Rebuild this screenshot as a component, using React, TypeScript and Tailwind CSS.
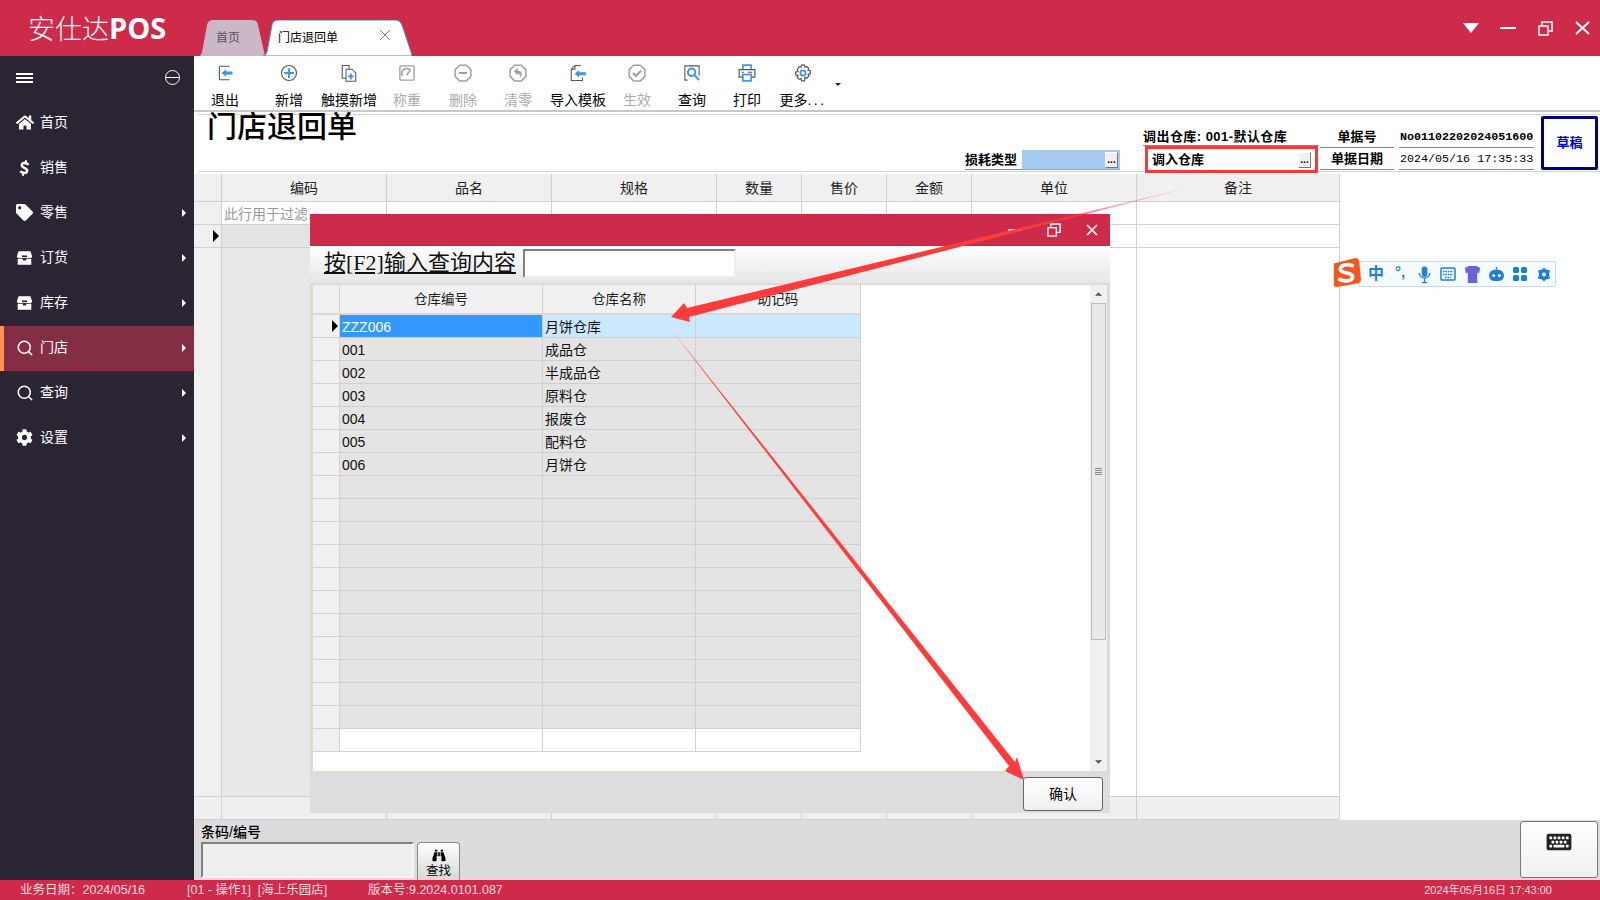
import React from "react";
import { FaHome, FaTag, FaCog, FaDollarSign, FaBinoculars, FaKeyboard } from "react-icons/fa";
import { Search } from "lucide-react";

const RED = "bg-[#cd2b49]";

const Box = ({ className = "" }: { className?: string }) => (
  <svg viewBox="0 0 20 18" className={className} fill="#fff">
    <path d="M3 1h14l2 6c0 1-1 2-2 2H3C2 9 1 8 1 7z" />
    <path d="M2 10h6v2h4v-2h6v7H2z" />
    <rect x="7" y="6" width="6" height="2" fill="#2a2433" />
  </svg>
);

const sideItems: { label: string; icon: React.ReactNode; arrow?: boolean; active?: boolean }[] = [
  { label: "首页", icon: <FaHome className="w-[18px] h-[17px]" /> },
  { label: "销售", icon: <FaDollarSign className="w-[11px] h-[16px] ml-[3px] rotate-12" /> },
  { label: "零售", icon: <FaTag className="w-[17px] h-[17px]" />, arrow: true },
  { label: "订货", icon: <Box className="w-[17px] h-[16px]" />, arrow: true },
  { label: "库存", icon: <Box className="w-[17px] h-[16px]" />, arrow: true },
  { label: "门店", icon: <Search className="w-[18px] h-[18px]" strokeWidth={2} />, arrow: true, active: true },
  { label: "查询", icon: <Search className="w-[18px] h-[18px]" strokeWidth={2} />, arrow: true },
  { label: "设置", icon: <FaCog className="w-[17px] h-[17px]" />, arrow: true },
];

const G = "#555555";
const D = "#a0a0a0";
const B = "#3a96e8";

const toolIcons: Record<string, React.ReactNode> = {
  exit: (
    <>
      <path d="M17 4H5a1.5 1.5 0 0 0-1.500 1.500v15A1.500 1.500 0 0 0 5 22h12" fill="none" stroke={G} strokeWidth="1.500" transform="translate(1 -1)" />
      <path d="M7.500 12l6-5v3h8.500v4h-8.500v3z" fill={B} />
    </>
  ),
  add: (
    <>
      <circle cx="12" cy="12" r="10" fill="none" stroke={G} strokeWidth="1.500" />
      <path d="M12 5.500v13M5.500 12h13" stroke={B} strokeWidth="2.500" />
    </>
  ),
  touch: (
    <>
      <path d="M8 19H3V2h9v5" fill="none" stroke={G} strokeWidth="1.400" />
      <path d="M8 7h8l5 5v11H8z" fill="#fff" stroke={G} strokeWidth="1.400" />
      <path d="M14.500 12.500v8M10.500 16.500h8" stroke={B} strokeWidth="2.400" />
    </>
  ),
  weigh: (
    <>
      <rect x="2.500" y="2.500" width="19" height="19" rx="2" fill="none" stroke={D} strokeWidth="1.800" />
      <path d="M6 16a6.500 6.500 0 0 1 11-7M11.500 15l5-7" fill="none" stroke={D} strokeWidth="2" />
    </>
  ),
  del: (
    <>
      <path d="M7.500 1.500h9L22.500 7.500v9L16.500 22.500h-9L1.500 16.500v-9z" fill="none" stroke={D} strokeWidth="2" />
      <path d="M6.500 12h11" stroke={D} strokeWidth="2.600" />
    </>
  ),
  zero: (
    <>
      <path d="M7.500 1.500h9L22.500 7.500v9L16.500 22.500h-9L1.500 16.500v-9z" fill="none" stroke={D} strokeWidth="2" />
      <path d="M6.500 10l5-5v3.500c6 0 7 5 3.500 9.500 0-4-1.500-5.500-3.500-5.500V15z" fill={D} />
    </>
  ),
  imp: (
    <>
      <path d="M16 2H8L3 7v15h15v-4M3 7h5V2" fill="none" stroke={G} strokeWidth="1.400" />
      <path d="M7.500 13l6-5v3h9v4h-9v3z" fill={B} />
    </>
  ),
  ok: (
    <>
      <path d="M7.500 1.500h9L22.500 7.500v9L16.500 22.500h-9L1.500 16.500v-9z" fill="none" stroke={D} strokeWidth="2" />
      <path d="M6.500 12l4 4L17.500 9" fill="none" stroke={D} strokeWidth="2.800" />
    </>
  ),
  query: (
    <>
      <path d="M6 2.500H2.500v19H6M18 2.500h3.500v13M6 2.500h12" fill="none" stroke={G} strokeWidth="1.400" />
      <circle cx="11.500" cy="11" r="5" fill="none" stroke={B} strokeWidth="2.600" />
      <path d="M15 14.500l6.500 7" stroke={B} strokeWidth="2.800" />
    </>
  ),
  print: (
    <>
      <path d="M6.500 7V1.500h11V7" fill="none" stroke={B} strokeWidth="2.200" />
      <path d="M6 17.500H1.500V7.500h21v10H18" fill="none" stroke={G} strokeWidth="1.500" />
      <path d="M13 11h6M5 11h3" stroke={G} strokeWidth="1.500" />
      <rect x="6.500" y="14" width="11" height="8.500" fill="none" stroke={B} strokeWidth="2.200" />
    </>
  ),
  more: (
    <>
      <path
        d="M10 1.500h4l.6 2.800 2.400-1 2.800 2.800-1.100 2.300 3 .6v4.200l-3 .6 1.100 2.300-2.800 2.800-2.400-1.100L14 22.500h-4l-.6-3.100-2.400 1.100-2.800-2.800 1.100-2.300-3-.6v-4.200l3-.6-1.100-2.300L7 3.300l2.400 1z"
        fill="none"
        stroke={G}
        strokeWidth="1.600"
      />
      <circle cx="12" cy="12" r="3.400" fill="none" stroke={B} strokeWidth="2.400" />
    </>
  ),
};

const tools = [
  { k: "exit", t: "退出", w: "w-[62px]" },
  { k: "add", t: "新增", w: "w-[66px]" },
  { k: "touch", t: "触摸新增", w: "w-[54px]" },
  { k: "weigh", t: "称重", w: "w-[62px]", off: true },
  { k: "del", t: "删除", w: "w-[50px]", off: true },
  { k: "zero", t: "清零", w: "w-[60px]", off: true },
  { k: "imp", t: "导入模板", w: "w-[60px]" },
  { k: "ok", t: "生效", w: "w-[58px]", off: true },
  { k: "query", t: "查询", w: "w-[52px]" },
  { k: "print", t: "打印", w: "w-[58px]" },
  { k: "more", t: "更多", w: "w-[54px]", dots: true },
];

const cols = [
  { t: "编码", w: "w-[165px]", gray: true },
  { t: "品名", w: "w-[165px]" },
  { t: "规格", w: "w-[165px]" },
  { t: "数量", w: "w-[85px]" },
  { t: "售价", w: "w-[85px]" },
  { t: "金额", w: "w-[85px]" },
  { t: "单位", w: "w-[165px]" },
  { t: "备注", w: "w-[203px]" },
];

const LINE = "border-r border-[#d0d0d0]";

const dlgRows: [string, string][] = [
  ["ZZZ006", "月饼仓库"],
  ["001", "成品仓"],
  ["002", "半成品仓"],
  ["003", "原料仓"],
  ["004", "报废仓"],
  ["005", "配料仓"],
  ["006", "月饼仓"],
  ...Array.from({ length: 11 }, () => ["", ""] as [string, string]),
];

const DotsBtn = () => (
  <div className="w-[13px] h-[16px] bg-[#f0f0f0] border border-[#fff] border-r-[#777] border-b-[#777] text-[10px] leading-[14px] text-center font-bold text-black">
    ...
  </div>
);

function Dialog() {
  return (
    <div className="absolute left-[310px] top-[214px] w-[800px] h-[599px] flex flex-col bg-[#dddde0] z-20">
      <div className={`h-[32px] ${RED} flex items-center justify-end shrink-0`}>
        <div className="w-[14px] h-[2px] bg-white mr-[25px]" />
        <svg viewBox="0 0 15 15" className="w-[14px] h-[14px] mr-[25px]" fill="none" stroke="#fff" strokeWidth="1.5">
          <rect x="1" y="5" width="9" height="9" />
          <path d="M4 4V1h10v9h-3" />
        </svg>
        <svg viewBox="0 0 12 12" className="w-[12px] h-[12px] mr-[12px]" fill="none" stroke="#fff" strokeWidth="1.6">
          <path d="M1 1l10 10M11 1L1 11" />
        </svg>
      </div>
      <div className="h-[37px] shrink-0 flex items-start bg-gradient-to-b from-white to-[#e6e6e6] pl-[14px] pt-[3px]">
        <span className="text-[22px] leading-[28px] underline text-[#111] w-[199px] whitespace-nowrap [font-family:'Liberation_Serif','Noto_Sans_CJK_SC',serif]">
          按[F2]输入查询内容
        </span>
        <div className="w-[213px] h-[29px] bg-white border-2 border-[#808080] border-r-[#eee] border-b-[#eee]" />
      </div>
      <div className="h-[491px] shrink-0 bg-white border-t-[2px] border-b-[3px] border-x-[3px] border-[#dedbd5] flex">
        <div className="w-[548px] shrink-0 flex flex-col text-[14px] text-[#111]">
          <div className="flex h-[30px] bg-[#f1f1f1] border-b-2 border-[#d8d8d8] text-[13.5px] text-[#222] text-center leading-[30px]">
            <div className={`w-[27px] ${LINE}`} />
            <div className={`w-[203px] ${LINE}`}>仓库编号</div>
            <div className={`w-[153px] ${LINE}`}>仓库名称</div>
            <div className={`w-[165px] ${LINE}`}>助记码</div>
          </div>
          {dlgRows.map((r, i) => (
            <div key={i} className="flex h-[23px] shrink-0 border-b border-[#d0d0d0] leading-[24px]">
              <div className={`w-[27px] bg-[#f1f1f1] ${LINE} relative`}>
                {i === 0 && (
                  <svg viewBox="0 0 6 12" className="absolute right-[1px] top-[5px] w-[6px] h-[12px]">
                    <path d="M0 0l6 6-6 6z" fill="#000" />
                  </svg>
                )}
              </div>
              <div className={`w-[203px] pl-[2px] ${LINE} ${i === 0 ? "bg-[#3399ff] text-white" : "bg-[#e4e4e4]"}`}>{r[0]}</div>
              <div className={`w-[153px] pl-[2px] ${LINE} ${i === 0 ? "bg-[#cce8ff]" : "bg-[#e4e4e4]"}`}>{r[1]}</div>
              <div className={`w-[165px] ${LINE} ${i === 0 ? "bg-[#cce8ff]" : "bg-[#e4e4e4]"}`} />
            </div>
          ))}
          <div className="flex h-[23px] shrink-0 border-b border-[#d0d0d0]">
            <div className={`w-[27px] bg-[#f1f1f1] ${LINE}`} />
            <div className={`w-[203px] ${LINE}`} />
            <div className={`w-[153px] ${LINE}`} />
            <div className={`w-[165px] ${LINE}`} />
          </div>
        </div>
        <div className="flex-1" />
        <div className="w-[17px] shrink-0 bg-[#f0f0f0] flex flex-col items-center">
          <div className="h-[18px] shrink-0 flex items-center justify-center">
            <svg viewBox="0 0 8 4" className="w-[7px] h-[4px]"><path d="M4 0l4 4H0z" fill="#555" /></svg>
          </div>
          <div className="w-[15px] h-[337px] shrink-0 bg-[#e9e9e9] border border-[#bdbdbd] flex items-center justify-center">
            <div className="w-[7px] h-[7px] border-y-[3px] border-double border-[#888]" />
          </div>
          <div className="flex-1" />
          <div className="h-[18px] shrink-0 flex items-center justify-center">
            <svg viewBox="0 0 8 4" className="w-[7px] h-[4px]"><path d="M0 0h8L4 4z" fill="#555" /></svg>
          </div>
        </div>
      </div>
      <div className="flex-1 flex items-start justify-end pr-[7px] pt-[3px]">
        <div className="w-[80px] h-[34px] rounded-[3px] border border-[#666] bg-gradient-to-b from-white to-[#efefef] text-center text-[14px] leading-[32px] text-black">
          确认
        </div>
      </div>
    </div>
  );
}

function Ime() {
  const c = "#1f7fd8";
  const Cell = ({ children }: { children: React.ReactNode }) => (
    <div className="w-[24px] shrink-0 flex items-center justify-center">{children}</div>
  );
  return (
    <div className="absolute left-[1330px] top-[257px] w-[226px] h-[31px] z-20">
      <div className="absolute left-[28px] top-[4px] w-[198px] h-[26px] bg-[#f6fbff] border border-[#c4dcf2] rounded-[2px] flex items-center pl-[5px]">
        <Cell><span className="text-[16px] font-bold leading-none text-[#1f7fd8]">中</span></Cell>
        <Cell><span className="text-[15px] font-bold leading-none -mt-[5px] text-[#1f7fd8]">°,</span></Cell>
        <Cell>
          <svg viewBox="0 0 16 22" className="w-[13px] h-[19px]">
            <rect x="4.500" y="1" width="7" height="13" rx="3.500" fill={c} />
            <path d="M1.500 9a6.500 6.500 0 0 0 13 0M8 16v5M5 21h6" stroke={c} strokeWidth="1.6" fill="none" />
          </svg>
        </Cell>
        <Cell>
          <svg viewBox="0 0 16 14" className="w-[16px] h-[14px]">
            <rect x="1" y="1" width="14" height="12" rx="1" fill="none" stroke={c} strokeWidth="1.5" />
            <path d="M3 4.500h10M3 7.500h10M5 10.500h6" stroke={c} strokeWidth="1.600" strokeDasharray="1.6 .8" />
          </svg>
        </Cell>
        <Cell>
          <svg viewBox="0 0 18 20" className="w-[17px] h-[19px]">
            <path d="M1 3l4-2h8l4 2-1 6-2-1v11H4V8L2 9z" fill="#6a62d8" />
          </svg>
        </Cell>
        <Cell>
          <svg viewBox="0 0 18 16" className="w-[17px] h-[15px]">
            <rect x="1" y="3" width="16" height="12" rx="6" fill={c} />
            <circle cx="6" cy="9" r="1.600" fill="#fff" />
            <circle cx="12" cy="9" r="1.600" fill="#fff" />
            <path d="M9 0v3" stroke={c} strokeWidth="1.5" />
          </svg>
        </Cell>
        <Cell>
          <svg viewBox="0 0 14 14" className="w-[14px] h-[14px]" fill={c}>
            <rect x="0" y="0" width="6" height="6" rx="1.500" />
            <rect x="8" y="0" width="6" height="6" rx="1.500" />
            <rect x="0" y="8" width="6" height="6" rx="1.500" />
            <rect x="8" y="8" width="6" height="6" rx="1.500" />
          </svg>
        </Cell>
        <Cell>
          <svg viewBox="0 0 14 14" className="w-[14px] h-[15px]" fill={c}>
            <path d="M7 0l2 2 4 1-1 4 1 4-4 1-2 2-2-2-4-1 1-4-1-4 4-1z" />
            <circle cx="7" cy="7" r="2" fill="#fff" />
          </svg>
        </Cell>
      </div>
      <svg viewBox="0 0 32 32" className="absolute left-0 top-0 w-[32px] h-[30px]">
        <path d="M3 7L26 1q3 0 4 3l2 20q0 3-3 4L6 32q-3 0-3-3z" fill="#f4571c" />
        <path d="M24 10c-4-3-14-2-14 3s13 3 13 8-10 6-15 2" fill="none" stroke="#fff" strokeWidth="4" />
      </svg>
    </div>
  );
}

export default function App() {
  return (
    <div className="relative w-screen h-screen overflow-hidden flex flex-col bg-white [font-family:'Liberation_Sans','Noto_Sans_CJK_SC',sans-serif]">
      {/* Title bar */}
      <header className={`h-[56px] shrink-0 ${RED} flex items-start text-white`}>
        <div className="w-[199px] shrink-0 pl-[28px] pt-[9px] flex items-baseline whitespace-nowrap">
          <span className="text-[27px] leading-[38px] font-light">安仕达</span>
          <span className="text-[29px] leading-[38px] font-bold [font-family:'Open_Sans',sans-serif]">POS</span>
        </div>
        <div className="flex mt-[20px]">
          <div className="relative w-[66px] h-[36px] text-[12px] text-[#555]">
            <svg viewBox="0 0 66 36" className="absolute inset-0 w-full h-full">
              <path d="M0 36q2 0 3-4L8 5q1-5 6-5h39q5 0 6 5l7 31z" fill="#c9b6c6" />
            </svg>
            <span className="relative block pl-[17px] leading-[36px]">首页</span>
          </div>
          <div className="relative -ml-[2px] w-[149px] h-[36px] text-[12px] text-black">
            <svg viewBox="0 0 149 36" className="absolute inset-0 w-full h-full">
              <path d="M0 36q3 0 4-4L9 5q1-5 6-5h118q4 0 6 5l9 27q1 4 1 4z" fill="#fff" stroke="#5b8db0" strokeWidth="1" />
            </svg>
            <span className="relative block pl-[15px] leading-[36px]">门店退回单</span>
            <svg viewBox="0 0 12 12" className="absolute left-[116px] top-[9px] w-[12px] h-[12px]" fill="none" stroke="#777" strokeWidth="1">
              <path d="M1 1l10 10M11 1L1 11" />
            </svg>
          </div>
        </div>
        <div className="ml-auto flex items-center h-[56px] pr-[10px]">
          <svg viewBox="0 0 16 10" className="w-[16px] h-[10px] -mt-[1px]"><path d="M0 0h16L8 10z" fill="#fff" /></svg>
          <div className="w-[16px] h-[2px] bg-white ml-[21px]" />
          <svg viewBox="0 0 15 15" className="w-[15px] h-[15px] ml-[22px]" fill="none" stroke="#fff" strokeWidth="1.5">
            <rect x="1" y="5" width="9" height="9" />
            <path d="M4 4V1h10v9h-3" />
          </svg>
          <svg viewBox="0 0 15 14" className="w-[15px] h-[14px] ml-[22px]" fill="none" stroke="#fff" strokeWidth="2">
            <path d="M1 1l13 12M14 1L1 13" />
          </svg>
        </div>
      </header>

      <div className="flex-1 flex min-h-0">
        {/* Sidebar */}
        <aside className="w-[194px] shrink-0 bg-[#2a2433] text-white flex flex-col">
          <div className="h-[45px] flex items-center justify-between pl-[16px] pr-[14px] pb-[2px]">
            <div className="w-[17px] h-[10px] border-y-2 border-white flex items-center">
              <div className="w-full h-[2px] bg-white" />
            </div>
            <div className="w-[15px] h-[15px] rounded-full border border-white flex items-center">
              <div className="w-full h-[1px] bg-white" />
            </div>
          </div>
          {sideItems.map((s) => (
            <div
              key={s.label}
              className={`h-[45px] flex items-center pl-[16px] pr-[8px] pb-[2px] text-[14px] ${s.active ? "bg-[#842e43] border-l-4 border-[#ff9350] !pl-[12px]" : ""}`}
            >
              <span className="w-[24px] shrink-0 flex items-center">{s.icon}</span>
              <span>{s.label}</span>
              {s.arrow && (
                <svg viewBox="0 0 4 8" className="ml-auto w-[4px] h-[8px]"><path d="M0 0l4 4-4 4z" fill="#fff" /></svg>
              )}
            </div>
          ))}
        </aside>

        {/* Main */}
        <main className="flex-1 flex flex-col min-w-0">
          <div className="h-[56px] shrink-0 border-b-2 border-[#c8c8c8] flex text-[14px] text-black">
            {tools.map((t) => (
              <div key={t.k} className={`${t.w} shrink-0 flex flex-col items-center pt-[8px] ${t.off ? "text-[#aaa]" : ""}`}>
                <svg viewBox="0 0 24 24" className="w-[22px] h-[22px]">{toolIcons[t.k]}</svg>
                <span className="mt-[8px] leading-[20px] whitespace-nowrap">
                  {t.t}
                  {t.dots && <span className="tracking-[2.4px]">...</span>}
                </span>
              </div>
            ))}
            <svg viewBox="0 0 6 3" className="w-[6px] h-[3px] mt-[27px] ml-[5px]"><path d="M0 0h6L3 3z" fill="#222" /></svg>
          </div>
          <div className="h-[2px] shrink-0" />
          <div className="h-[1px] shrink-0 ml-[4px] bg-[#d4d4d4]" />

          {/* Form header */}
          <section className="h-[56px] shrink-0 flex text-black relative">
            <h1 className="pl-[13px] -mt-[5px] text-[30px] leading-[34px] font-medium whitespace-nowrap h-[34px]">门店退回单</h1>
            <div className="ml-auto flex text-[13px] font-bold">
              <div className="w-[155px] mt-[35px] h-[20px] flex">
                <div className="w-[57px] leading-[20px] border-b border-[#888] whitespace-nowrap">损耗类型</div>
                <div className="w-[98px] bg-[#a6c9f0] flex items-center justify-end pr-[2px] border-b border-[#9aa]">
                  <DotsBtn />
                </div>
              </div>
              <div className="w-[25px]" />
              <div className="w-[173px] flex flex-col">
                <div className="h-[31px] shrink-0 flex items-end whitespace-nowrap -ml-[2px] leading-[16px] border-b border-[#888] -mr-[1px] tracking-[0.45px]">
                  调出仓库: 001-默认仓库
                </div>
                <div className="h-[27px] shrink-0 border-[3px] border-[#f63a3a] flex items-center justify-between pl-[4px] pr-[4px] relative z-10 bg-white">
                  <span>调入仓库</span>
                  <DotsBtn />
                </div>
              </div>
              <div className="w-[74px] ml-[2px] flex flex-col text-center">
                <div className="h-[33px] shrink-0 flex items-end justify-center border-b border-[#888] leading-[16px] pb-[2px]">单据号</div>
                <div className="h-[21px] shrink-0 leading-[20px] border-b border-[#888] mt-[1px]">单据日期</div>
              </div>
              <div className="w-[135px] ml-[5px] flex flex-col [font-family:'Liberation_Mono','Noto_Sans_CJK_SC',monospace] text-[11.7px] whitespace-nowrap">
                <div className="h-[33px] shrink-0 flex items-end border-b border-[#888] leading-[16px] pb-[2px] pl-[1px]">No01102202024051600</div>
                <div className="h-[21px] shrink-0 leading-[20px] border-b border-[#888] mt-[1px] pl-[1px] font-normal">2024/05/16 17:35:33</div>
              </div>
              <div className="w-[57px] h-[54px] ml-[7px] mr-[2px] mt-[1px] border-[3px] border-[#000080] rounded-[2px] flex items-center justify-center text-[#0000cc] text-[13px]">
                草稿
              </div>
            </div>
          </section>
          <div className="h-[1px] shrink-0 ml-[4px] bg-[#d4d4d4]" />
          <div className="h-[2px] shrink-0" />

          {/* Grid */}
          <div className="flex-1 min-h-0 flex flex-col w-[1146px] text-[14px] text-[#222]">
            <div className="h-[28px] shrink-0 flex bg-[#f0f0f0] border-b border-[#d0d0d0] text-center leading-[28px]">
              <div className={`w-[28px] ${LINE}`} />
              {cols.map((c) => (
                <div key={c.t} className={`${c.w} ${LINE}`}>{c.t}</div>
              ))}
            </div>
            <div className="h-[23px] shrink-0 flex border-b border-[#d0d0d0]">
              <div className={`w-[28px] bg-[#f0f0f0] ${LINE}`} />
              {cols.map((c, i) => (
                <div key={c.t} className={`${c.w} ${LINE} text-[14px] leading-[25px] text-[#999] pl-[2px] overflow-hidden whitespace-nowrap`}>
                  {i === 0 ? "此行用于过滤..." : ""}
                </div>
              ))}
            </div>
            <div className="h-[23px] shrink-0 flex border-b border-[#d0d0d0]">
              <div className={`w-[28px] bg-[#f0f0f0] ${LINE} relative`}>
                <svg viewBox="0 0 6 12" className="absolute right-[2px] top-[5px] w-[6px] h-[12px]"><path d="M0 0l6 6-6 6z" fill="#000" /></svg>
              </div>
              {cols.map((c) => (
                <div key={c.t} className={`${c.w} ${LINE} ${c.gray ? "bg-[#e4e4e4]" : ""}`} />
              ))}
            </div>
            <div className="flex-1 min-h-0 flex border-b border-[#d0d0d0]">
              <div className={`w-[28px] bg-[#f0f0f0] ${LINE}`} />
              {cols.map((c) => (
                <div key={c.t} className={`${c.w} ${LINE} ${c.gray ? "bg-[#e8e8e8]" : ""}`} />
              ))}
            </div>
            <div className="h-[23px] shrink-0 flex bg-[#efefef] border-b border-[#d0d0d0]">
              <div className={`w-[28px] ${LINE}`} />
              {cols.map((c) => (
                <div key={c.t} className={`${c.w} ${LINE}`} />
              ))}
            </div>
          </div>

          {/* Bottom bar */}
          <div className="h-[60px] shrink-0 bg-[#dcdcde] flex text-black">
            <div className="w-[220px] ml-[7px] shrink-0 flex flex-col">
              <div className="h-[22px] text-[14px] font-medium leading-[24px] whitespace-nowrap">条码/编号</div>
              <div className="w-[213px] h-[36px] bg-[#eeeeee] border-2 border-[#808080] border-r-[#f5f5f5] border-b-[#f5f5f5]" />
            </div>
            <div className="w-[43px] h-[38px] mt-[22px] -ml-[4px] rounded-t-[4px] border border-[#888] border-b-0 bg-gradient-to-b from-white to-[#d8d8d4] flex flex-col items-center pt-[6px] text-[12.5px] leading-[15px]">
              <FaBinoculars className="w-[16px] h-[13px]" />
              <span className="mt-[2px]">查找</span>
            </div>
            <div className="ml-auto mr-[2px] mt-[1px] w-[78px] h-[57px] rounded-[3px] border border-[#777] bg-gradient-to-b from-white to-[#f0f0f0] flex items-start justify-center pt-[9px]">
              <FaKeyboard className="w-[30px] h-[22px] text-[#222]" />
            </div>
          </div>
        </main>
      </div>

      {/* Status bar */}
      <footer className={`h-[20px] shrink-0 ${RED} flex items-center text-[12.5px] text-[#fbdbe2] whitespace-nowrap`}>
        <span className="ml-[20px] w-[167px]">业务日期：2024/05/16</span>
        <span className="w-[181px]">[01 - 操作1]&nbsp;&nbsp;[海上乐园店]</span>
        <span>版本号:9.2024.0101.087</span>
        <span className="ml-auto mr-[48px] text-[11px]">2024年05月16日 17:43:00</span>
      </footer>

      <Dialog />
      <Ime />

      {/* Annotation arrows */}
      <svg viewBox="0 0 1600 900" className="absolute inset-0 w-[1600px] h-[900px] z-30 pointer-events-none">
        <defs>
          <linearGradient id="fade" x1="1199" y1="185" x2="1000" y2="235" gradientUnits="userSpaceOnUse">
            <stop offset="0" stopColor="#ff3b3b" stopOpacity="0.1" />
            <stop offset="1" stopColor="#ff3b3b" />
          </linearGradient>
        </defs>
        <polygon points="1199,185 687,308 684,303 671,317 690,322 689,317" fill="url(#fade)" />
        <polygon points="670,328 1015,762 1017,757 1024,780 1005,771 1009,766" fill="#ff3b3b" />
      </svg>
    </div>
  );
}
